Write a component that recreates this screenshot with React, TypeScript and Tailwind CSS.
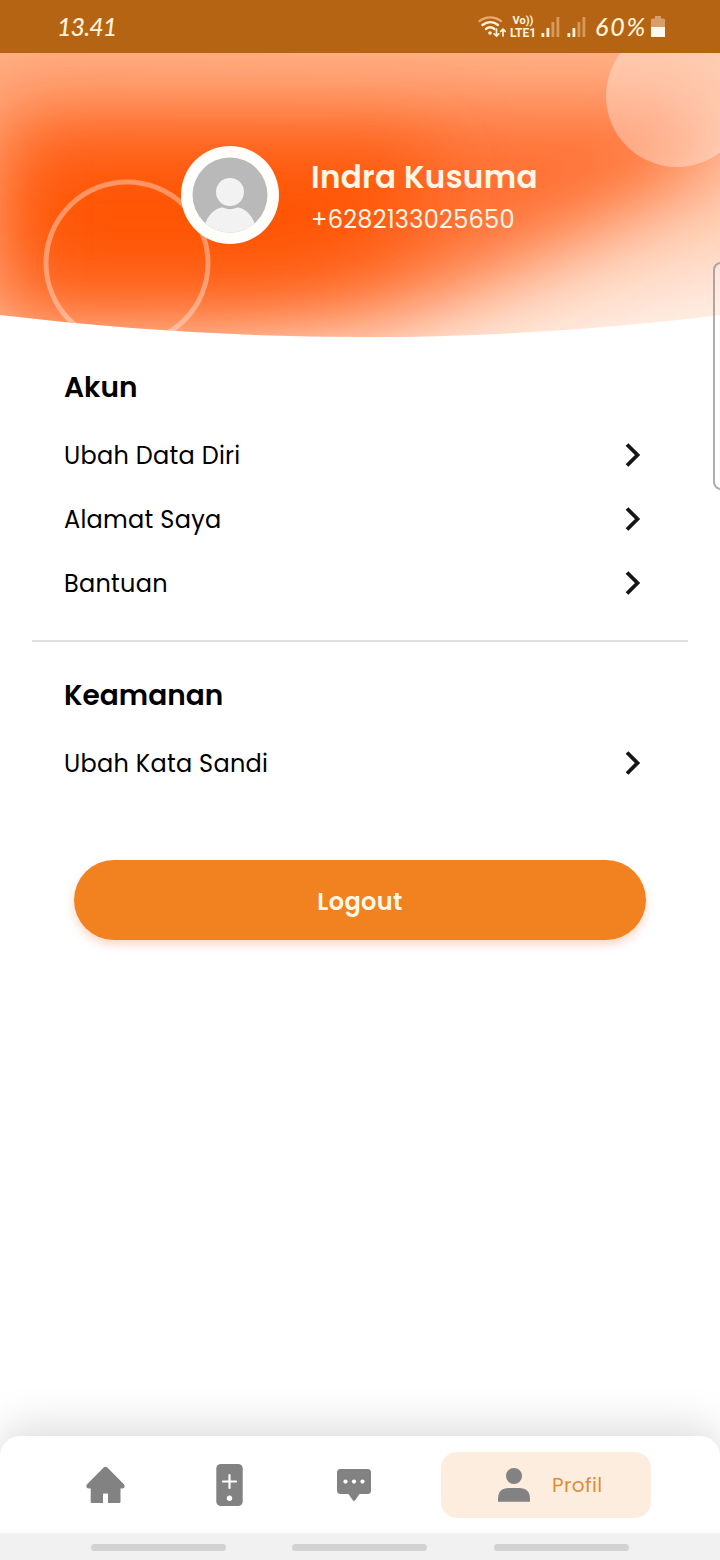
import React from 'react';

interface MenuRowProps {
  label: string;
}

function ChevronIcon() {
  return (
    <svg width="18" height="26" viewBox="0 0 18 26" fill="none" className="mr-[14px] shrink-0">
      <path d="M3 2.5 13.5 13 3 23.5" stroke="#151515" strokeWidth="3.8" />
    </svg>
  );
}

function MenuRow({ label }: MenuRowProps) {
  return (
    <button className="flex h-16 w-full items-center justify-between text-left text-black">
      <span className="pt-[1px] text-[24px] leading-none tracking-[0.27px] whitespace-nowrap">{label}</span>
      <ChevronIcon />
    </button>
  );
}

function SignalIcon() {
  return (
    <svg width="19" height="22" viewBox="0 0 19 22">
      <rect x="0.5" y="17" width="2.8" height="4" fill="#fff3dc" />
      <rect x="5.5" y="12" width="2.8" height="9" fill="#fff3dc" />
      <rect x="10.5" y="6" width="2.8" height="15" fill="#d89a5c" />
      <rect x="15.5" y="1" width="2.8" height="20" fill="#d89a5c" />
    </svg>
  );
}

function StatusBar() {
  return (
    <div className="flex h-[53px] items-center bg-[#b56413] text-[#fff3dc]">
      <span className="ml-[57px] w-[60px] font-['Lato'] text-[25px] leading-none font-medium tracking-[-0.9px] italic">
        13.41
      </span>
      <div className="ml-[361px] flex items-center">
        <svg width="28" height="24" viewBox="0 0 28 24" fill="none" strokeLinecap="round">
          <path d="M1.5 6.2C7.5 1 17 1 23 6.2" stroke="#e5ac73" strokeWidth="2.2" />
          <path d="M4.5 10C9.2 6.2 15.5 6.2 20 10" stroke="#fff3dc" strokeWidth="2.4" />
          <path d="M8 14c2.6-2 6-2 8.4 0" stroke="#fff3dc" strokeWidth="2.4" />
          <circle cx="12" cy="18" r="1.8" fill="#fff3dc" />
          <path
            d="M18.5 14v7M16.2 18.8l2.3 2.3 2.3-2.3M25 21v-7M22.7 16.4l2.3-2.3 2.3 2.3"
            stroke="#fff3dc"
            strokeWidth="1.7"
          />
        </svg>
        <div className="ml-[4px] flex w-[26px] flex-col items-center font-['Roboto'] text-[12px] leading-[12px] font-bold">
          <span className="text-[11px]">Vo))</span>
          <span>LTE1</span>
        </div>
        <div className="ml-[5px] flex gap-[7px]">
          <SignalIcon />
          <SignalIcon />
        </div>
        <span className="ml-[9px] w-[56px] font-['Lato'] text-[25px] leading-none font-medium tracking-[1.8px] italic">
          60%
        </span>
        <svg width="14" height="22" viewBox="0 0 14 22">
          <path d="M4 0h6v2.5h2.5Q14 2.5 14 4v7H0V4q0-1.5 1.5-1.5H4z" fill="#d6a06c" />
          <path d="M0 11h14v10H0z" fill="#fff8ee" />
        </svg>
      </div>
    </div>
  );
}

function HeaderBackdrop() {
  return (
    <svg className="absolute inset-0" width="720" height="284" viewBox="0 0 720 284">
      <defs>
        <clipPath id="curve">
          <path d="M0 0H720V262Q370 306 0 262Z" />
        </clipPath>
        <linearGradient id="base" x1="0.25" y1="0" x2="0.8" y2="1">
          <stop offset="0" stopColor="#ffb085" />
          <stop offset="0.55" stopColor="#ffb894" />
          <stop offset="1" stopColor="#ffeade" />
        </linearGradient>
        <filter id="glow" x="-40%" y="-80%" width="180%" height="260%">
          <feGaussianBlur stdDeviation="40" />
        </filter>
      </defs>
      <g clipPath="url(#curve)">
        <rect width="720" height="284" fill="url(#base)" />
        <path d="M-5 50H700V110L620 155 500 215 380 262 200 272H-5Z" fill="#ff7030" filter="url(#glow)" />
        <path d="M20 100H440L400 180 300 225H20Z" fill="#ff5304" filter="url(#glow)" />
        <circle cx="677" cy="43" r="71" fill="#fff" fillOpacity="0.34" />
        <circle cx="127" cy="210" r="81" fill="none" stroke="#fff" strokeOpacity="0.36" strokeWidth="5" />
      </g>
    </svg>
  );
}

function ProfileHeader() {
  return (
    <header className="relative h-[284px]">
      <HeaderBackdrop />
      <div className="relative flex items-start pt-[93px] pl-[181px]">
        <svg width="98" height="98" viewBox="0 0 98 98" className="shrink-0">
          <defs>
            <clipPath id="avatar">
              <circle cx="49" cy="49" r="37.5" />
            </clipPath>
          </defs>
          <circle cx="49" cy="49" r="49" fill="#fffefa" />
          <g clipPath="url(#avatar)">
            <rect width="98" height="98" fill="#b9b9b9" />
            <circle cx="49" cy="46" r="14" fill="#f2f2f2" />
            <path d="M22 88C24 68 36 61.5 42 61.5Q49 65 56 61.5C62 61.5 74 68 76 88Z" fill="#f2f2f2" />
          </g>
        </svg>
        <div className="ml-8 flex flex-col pt-[11px] whitespace-nowrap text-[#fff6e6]">
          <span className="text-[31px] leading-[41px] font-semibold tracking-[0.32px]">Indra Kusuma</span>
          <span className="text-[24px] leading-[44px] tracking-[0.3px]">+6282133025650</span>
        </div>
      </div>
    </header>
  );
}

function BottomNav() {
  return (
    <nav className="flex h-[97px] items-center rounded-t-[20px] bg-white shadow-[0_-8px_44px_rgba(0,0,0,0.15)]">
      <svg width="40" height="38" viewBox="0 0 40 38" className="ml-[85px]" fill="#828282">
        <path d="M18.9 1.3Q20.5 0 22.1 1.3L38.9 18.2Q40.2 20 39.2 21.6Q38.6 22.6 37 22.6H35.5V35.7Q35.5 37 34.2 37H23V28.2Q23 27.5 22.3 27.5H18.7Q18 27.5 18 28.2V37H7Q5.7 37 5.7 35.7V22.6H4Q2.4 22.6 1.8 21.6Q.8 20 2.1 18.2Z" />
      </svg>
      <svg width="27" height="42" viewBox="0 0 27 42" className="ml-[91px]">
        <rect x="0.3" width="26.4" height="42" rx="4.5" fill="#828282" />
        <path d="M13.5 11v13M7 17.5h13" stroke="#fff" strokeWidth="2.2" strokeLinecap="round" />
        <circle cx="13.5" cy="34.3" r="2.7" fill="#fff" />
      </svg>
      <svg width="34" height="33" viewBox="0 0 34 33" className="mt-[2px] ml-[94px]">
        <path
          d="M3.5 0H30.5Q34 0 34 3.5V21.5Q34 25 30.5 25H22.5L18.2 31.3Q17 32.8 15.8 31.3L11.5 25H3.5Q0 25 0 21.5V3.5Q0 0 3.5 0Z"
          fill="#828282"
        />
        <circle cx="8.5" cy="12.6" r="2.1" fill="#fff" />
        <circle cx="17" cy="12.6" r="2.1" fill="#fff" />
        <circle cx="25.5" cy="12.6" r="2.1" fill="#fff" />
      </svg>
      <button className="ml-[70px] flex h-[66px] w-[210px] items-center rounded-[16px] bg-[#fdeddf] pl-[57px]">
        <svg width="32" height="34" viewBox="0 0 32 34" fill="#828282">
          <circle cx="16" cy="8" r="8" />
          <path d="M0 33.7V31Q0 20 11 20H21Q32 20 32 31V33.7Z" />
        </svg>
        <span className="ml-[22px] text-[20px] leading-none tracking-[0.4px] text-[#dc8f36]">Profil</span>
      </button>
    </nav>
  );
}

export default function App() {
  return (
    <div className="relative flex h-[1560px] w-[720px] flex-col overflow-hidden bg-white font-['Poppins','Inter',sans-serif]">
      <StatusBar />
      <ProfileHeader />

      <main className="flex flex-1 flex-col">
        <section className="px-16 pt-[37px]">
          <h2 className="mb-[21px] text-[28px] leading-[28px] font-semibold text-black">Akun</h2>
          <MenuRow label="Ubah Data Diri" />
          <MenuRow label="Alamat Saya" />
          <MenuRow label="Bantuan" />
        </section>
        <hr className="mx-8 mt-[25px] border-t-2 border-[#e0e0e0]" />
        <section className="px-16 pt-[40px]">
          <h2 className="mb-[21px] text-[28px] leading-[28px] font-semibold text-black">Keamanan</h2>
          <MenuRow label="Ubah Kata Sandi" />
        </section>
        <button className="mx-[74px] mt-[65px] h-20 rounded-full bg-[#f28120] pt-1 text-[24px] font-semibold tracking-[0.4px] text-[#fff8e8] shadow-[0_5px_10px_rgba(242,100,32,0.25)]">
          Logout
        </button>
      </main>

      <BottomNav />
      <div className="z-10 flex h-[27px] items-center gap-[66.4px] bg-[#f1f1f1] pt-px pl-[91px]">
        <span className="h-[7px] w-[135px] rounded-full bg-[#d2d2d2]" />
        <span className="h-[7px] w-[135px] rounded-full bg-[#d2d2d2]" />
        <span className="h-[7px] w-[135px] rounded-full bg-[#d2d2d2]" />
      </div>

      {/* edge panel handle */}
      <div className="absolute top-[262px] -right-1 h-[228px] w-[11px] rounded-l-[8px] border-2 border-[#8a8a8a]/70 bg-white/20" />
    </div>
  );
}
